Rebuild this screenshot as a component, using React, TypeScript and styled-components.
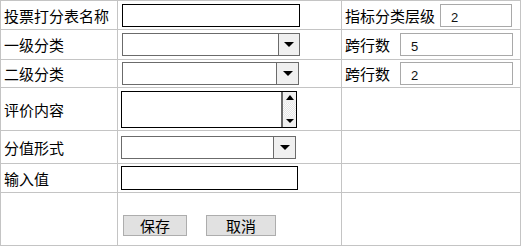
import styled, { createGlobalStyle } from "styled-components";

const GlobalStyle = createGlobalStyle`
  body {
    margin: 0;
    background: #fff;
    font-family: "Noto Sans CJK SC", "Noto Sans", sans-serif;
  }
`;

const FormTable = styled.table`
  border-collapse: collapse;
  table-layout: fixed;
  width: 520px;
  font-size: 15px;
  color: #000;

  td {
    border: 1px solid #c4c4c4;
    padding: 0;
  }
`;

const Row = styled.tr<{ $h: number }>`
  height: ${(p) => p.$h}px;
`;

const LabelCell = styled.td`
  padding-left: 3px !important;
  white-space: nowrap;
`;

const FieldCell = styled.td<{ $pad?: number; $bottom?: number }>`
  padding-left: ${(p) => p.$pad ?? 4}px !important;
  vertical-align: ${(p) => (p.$bottom ? "bottom" : "middle")};
  padding-bottom: ${(p) => p.$bottom ?? 0}px !important;
`;

const Inline = styled.div`
  display: flex;
  align-items: center;
  white-space: nowrap;
`;

const TextInput = styled.input<{ $w: number; $h?: number; $light?: boolean; $gap?: number }>`
  display: block;
  box-sizing: border-box;
  width: ${(p) => p.$w}px;
  height: ${(p) => p.$h ?? 23}px;
  margin: 0 0 0 ${(p) => p.$gap ?? 0}px;
  padding: 4px 0 0 10px;
  border: 1px solid ${(p) => (p.$light ? "#a9a9a9" : "#000")};
  font-family: "Liberation Sans", Arial, sans-serif;
  font-size: 13px;
  color: #111;
  background: #fff;
  outline: none;
`;

const SelectBox = styled.div<{ $w: number; $btn?: number }>`
  box-sizing: border-box;
  width: ${(p) => p.$w}px;
  height: 23px;
  display: flex;
  border: 1px solid #6b6b6b;
  background: #fff;

  > span:first-child {
    flex: 1;
  }
`;

const SelectButton = styled.span<{ $w: number }>`
  width: ${(p) => p.$w}px;
  border-left: 1px solid #6b6b6b;
  background: #f0f0f0;
  display: flex;
  align-items: center;
  justify-content: center;
`;

const DownArrow = styled.span<{ $size?: number }>`
  width: 0;
  height: 0;
  border-left: ${(p) => p.$size ?? 5}px solid transparent;
  border-right: ${(p) => p.$size ?? 5}px solid transparent;
  border-top: ${(p) => p.$size ?? 5}px solid #000;
`;

const UpArrow = styled.span`
  width: 0;
  height: 0;
  border-left: 4px solid transparent;
  border-right: 4px solid transparent;
  border-bottom: 5px solid #000;
`;

const MemoBox = styled.div`
  box-sizing: border-box;
  width: 176px;
  height: 37px;
  display: flex;
  border: 1px solid #000;
  background: #fff;
`;

const MemoText = styled.textarea`
  flex: 1;
  border: none;
  resize: none;
  outline: none;
  padding: 0;
  margin: 0;
`;

const ScrollBar = styled.div`
  width: 13px;
  display: flex;
  flex-direction: column;
  border-left: 2px solid #6b6b6b;
`;

const ScrollButton = styled.div`
  height: 11px;
  background: #f0f0f0;
  display: flex;
  align-items: center;
  justify-content: center;
`;

const ScrollTrack = styled.div`
  flex: 1;
  background-color: #f4f4f4;
  background-image: repeating-conic-gradient(#e4e4e4 0 25%, #fbfbfb 0 50%);
  background-size: 2px 2px;
`;

const ButtonRow = styled.div`
  display: flex;
  gap: 19px;
  padding-left: 2px;
`;

const PlainButton = styled.button<{ $w: number }>`
  box-sizing: border-box;
  width: ${(p) => p.$w}px;
  height: 21px;
  padding: 0;
  border: 1px solid #adadad;
  background: #e1e1e1;
  font-family: "Noto Sans CJK SC", sans-serif;
  font-size: 15px;
  line-height: 18px;
  color: #000;
`;

const Select = ({ w, btn }: { w: number; btn: number }) => (
  <SelectBox $w={w}>
    <span />
    <SelectButton $w={btn}>
      <DownArrow />
    </SelectButton>
  </SelectBox>
);

export default function App() {
  return (
    <>
      <GlobalStyle />
      <FormTable>
        <colgroup>
          <col style={{ width: 117 }} />
          <col style={{ width: 224 }} />
          <col style={{ width: 179 }} />
        </colgroup>
        <tbody>
          <Row $h={29}>
            <LabelCell>投票打分表名称</LabelCell>
            <FieldCell>
              <TextInput $w={178} />
            </FieldCell>
            <FieldCell $pad={3}>
              <Inline>
                指标分类层级
                <TextInput $w={72} $light $gap={5} defaultValue="2" />
              </Inline>
            </FieldCell>
          </Row>
          <Row $h={30}>
            <LabelCell>一级分类</LabelCell>
            <FieldCell>
              <Select w={178} btn={20} />
            </FieldCell>
            <FieldCell $pad={3}>
              <Inline>
                跨行数
                <TextInput $w={113} $light $gap={10} defaultValue="5" />
              </Inline>
            </FieldCell>
          </Row>
          <Row $h={28}>
            <LabelCell>二级分类</LabelCell>
            <FieldCell>
              <Select w={177} btn={21} />
            </FieldCell>
            <FieldCell $pad={3}>
              <Inline>
                跨行数
                <TextInput $w={113} $light $gap={10} defaultValue="2" />
              </Inline>
            </FieldCell>
          </Row>
          <Row $h={43}>
            <LabelCell>评价内容</LabelCell>
            <FieldCell $pad={3}>
              <MemoBox>
                <MemoText />
                <ScrollBar>
                  <ScrollButton>
                    <UpArrow />
                  </ScrollButton>
                  <ScrollTrack />
                  <ScrollButton>
                    <DownArrow $size={4} />
                  </ScrollButton>
                </ScrollBar>
              </MemoBox>
            </FieldCell>
            <FieldCell />
          </Row>
          <Row $h={33}>
            <LabelCell>分值形式</LabelCell>
            <FieldCell $pad={3}>
              <Select w={175} btn={21} />
            </FieldCell>
            <FieldCell />
          </Row>
          <Row $h={29}>
            <LabelCell>输入值</LabelCell>
            <FieldCell $pad={3}>
              <TextInput $w={177} $h={24} />
            </FieldCell>
            <FieldCell />
          </Row>
          <Row $h={53}>
            <LabelCell />
            <FieldCell $pad={3} $bottom={9}>
              <ButtonRow>
                <PlainButton $w={64}>保存</PlainButton>
                <PlainButton $w={70}>取消</PlainButton>
              </ButtonRow>
            </FieldCell>
            <FieldCell />
          </Row>
        </tbody>
      </FormTable>
    </>
  );
}
